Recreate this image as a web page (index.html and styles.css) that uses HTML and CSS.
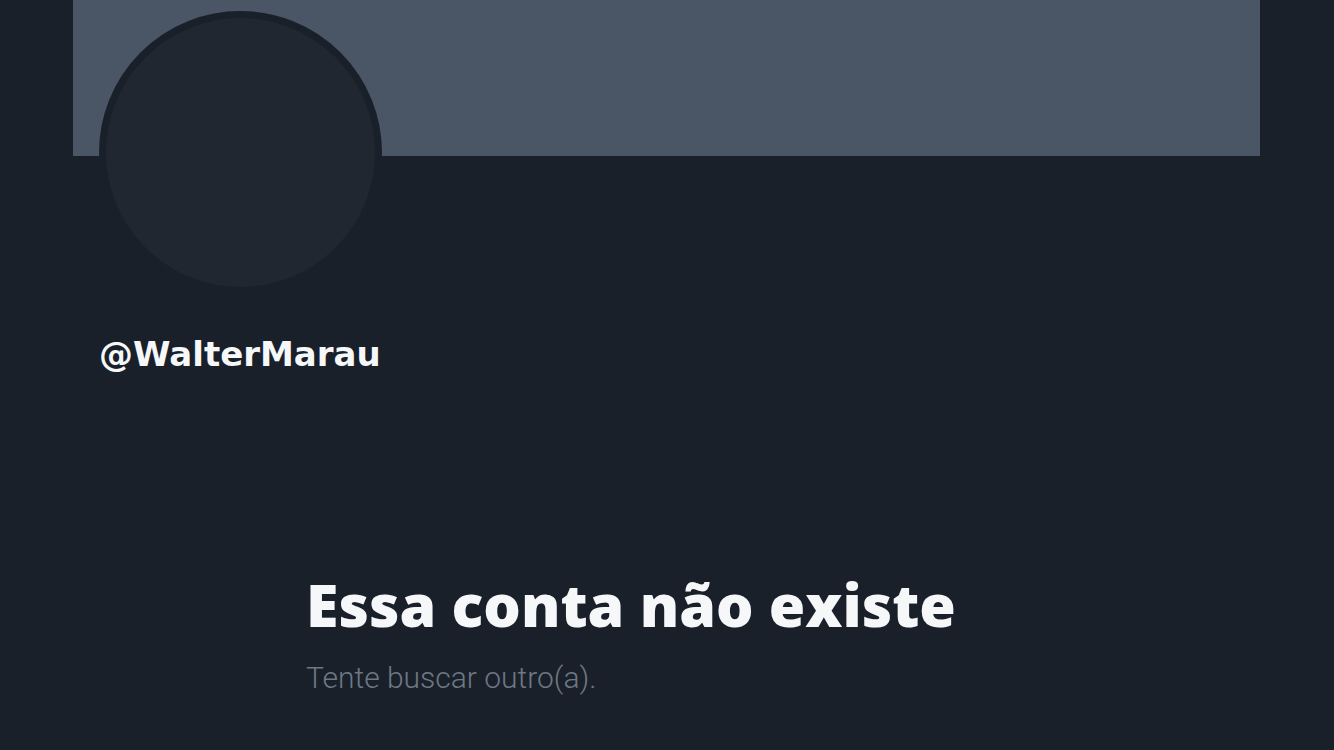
FILE: index.html
```html
<!DOCTYPE html>
<html lang="pt">
<head>
	<meta charset="UTF-8">
	<title>Perfil</title>
	<link rel="stylesheet" href="styles.css">
</head>
<body>
	<div class="profile">
		<div class="profile-banner"></div>
		<div class="profile-head">
			<div class="profile-avatar"></div>
			<div class="profile-handle">@WalterMarau</div>
		</div>
		<div class="empty-state">
			<h1 class="empty-title">Essa conta não existe</h1>
			<p class="empty-text">Tente buscar outro(a).</p>
		</div>
	</div>
</body>
</html>
```

FILE: styles.css
```css
*{
	margin: 0;
	padding: 0;
	box-sizing: border-box;
}
html,body{
	height: 100%;
}
body{
	background-color: #19202a;
	font-family: "Open Sans", "Noto Sans", sans-serif;
	color: #f5f7f9;
	overflow: hidden;
}
.profile{
	margin: 0 74px 0 73px;
}
.profile-banner{
	height: 156px;
	background-color: #4a5566;
}
.profile-head{
	padding-left: 26px;
}
.profile-avatar{
	width: 283px;
	height: 283px;
	margin-top: -145px;
	border-radius: 50%;
	border: 7px solid #19202a;
	background-color: #212731;
}
.profile-handle{
	margin-top: 40px;
	font-family: "DejaVu Sans", sans-serif;
	font-size: 34px;
	font-weight: 700;
	line-height: 40px;
}
.empty-state{
	padding-left: 233px;
	margin-top: 195px;
}
.empty-title{
	font-size: 59px;
	font-weight: 800;
	line-height: 70px;
}
.empty-text{
	margin-top: 21px;
	font-family: Roboto, sans-serif;
	font-size: 30px;
	font-weight: 300;
	line-height: 36px;
	color: #6e7784;
}
```
